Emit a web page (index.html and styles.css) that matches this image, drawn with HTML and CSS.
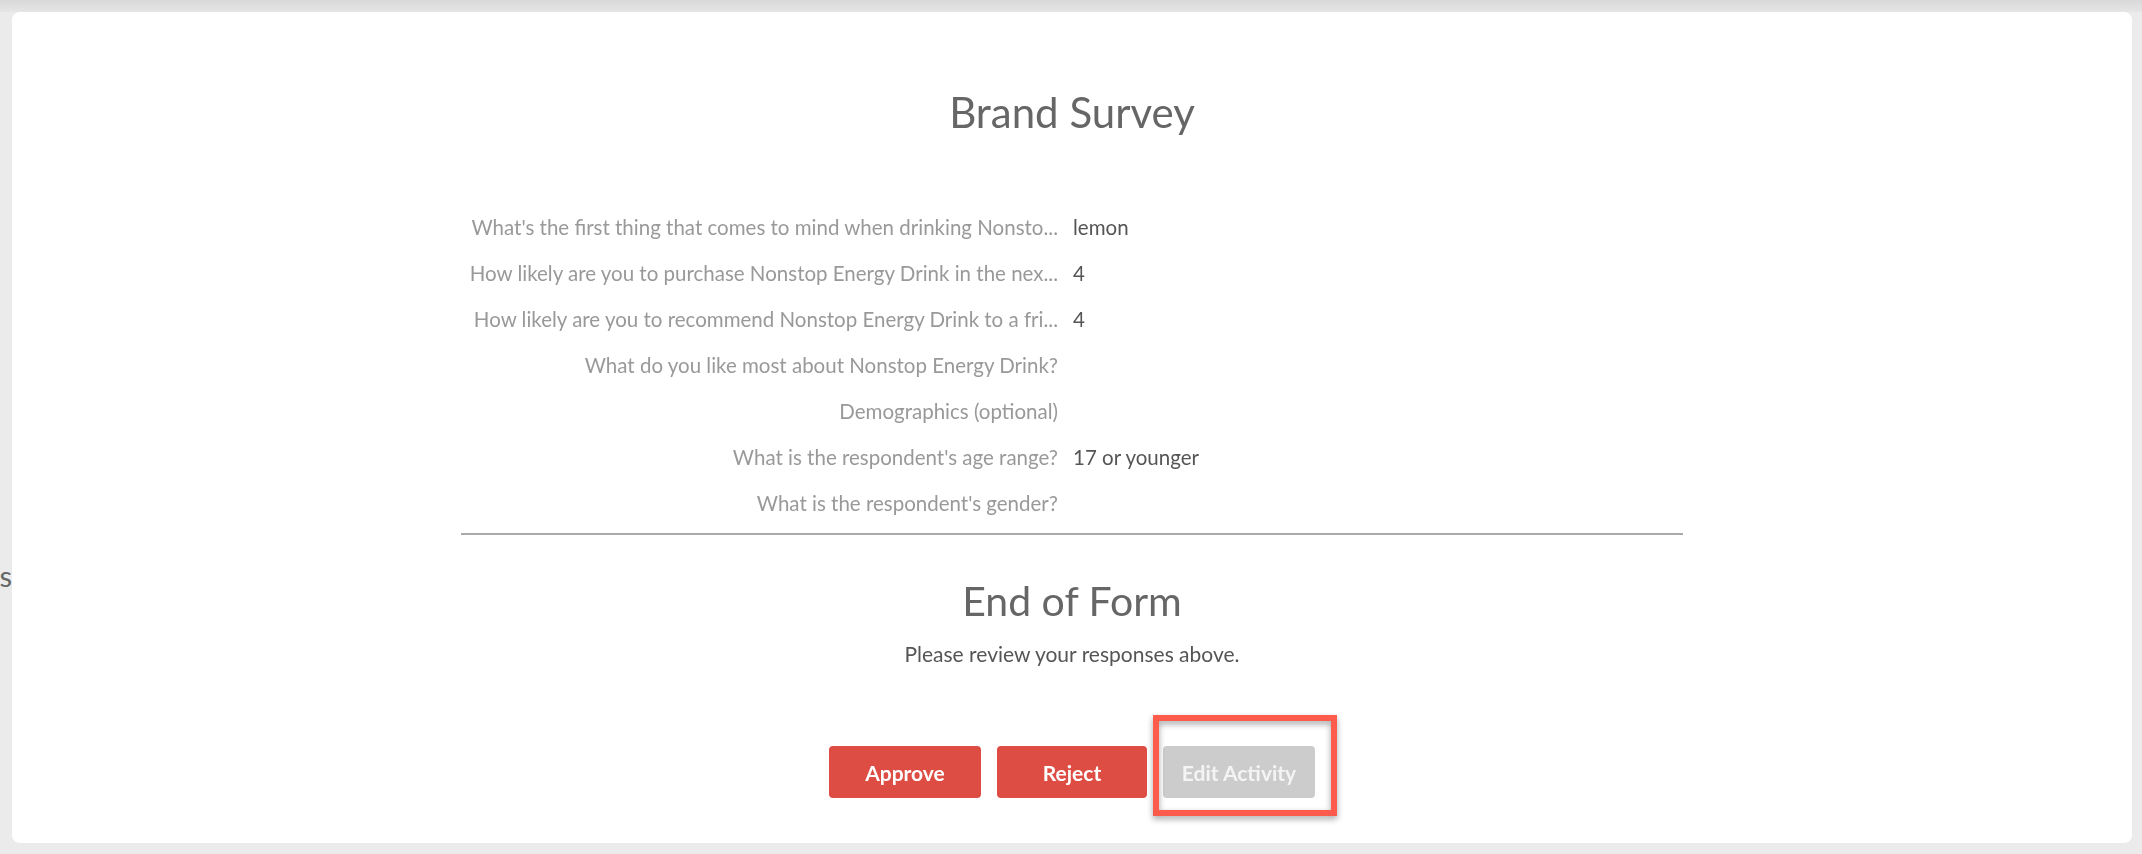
FILE: index.html
```html
<!DOCTYPE html>
<html>
  <head>
    <link rel="stylesheet" href="styles.css">
  </head>
  <body>
    <div class="page-behind">
      <nav class="side-nav">
        <span class="side-nav-item">Reports</span>
      </nav>
    </div>

    <div class="review-modal">
      <div class="form-view">
        <h1 class="form-title">Brand Survey</h1>

        <div class="form-body">
          <div class="responses">
            <div class="response-row">
              <div class="response-label">What's the first thing that comes to mind when drinking Nonsto...</div>
              <div class="response-value">lemon</div>
            </div>
            <div class="response-row">
              <div class="response-label">How likely are you to purchase Nonstop Energy Drink in the nex...</div>
              <div class="response-value">4</div>
            </div>
            <div class="response-row">
              <div class="response-label">How likely are you to recommend Nonstop Energy Drink to a fri...</div>
              <div class="response-value">4</div>
            </div>
            <div class="response-row">
              <div class="response-label">What do you like most about Nonstop Energy Drink?</div>
              <div class="response-value"></div>
            </div>
            <div class="response-row">
              <div class="response-label">Demographics (optional)</div>
              <div class="response-value"></div>
            </div>
            <div class="response-row">
              <div class="response-label">What is the respondent's age range?</div>
              <div class="response-value">17 or younger</div>
            </div>
            <div class="response-row">
              <div class="response-label">What is the respondent's gender?</div>
              <div class="response-value"></div>
            </div>
          </div>

          <hr class="form-divider" />
        </div>

        <div class="form-end">
          <h2 class="form-end-title">End of Form</h2>
          <p class="form-end-note">Please review your responses above.</p>
        </div>

        <div class="review-actions">
          <button class="action-button approve-button">Approve</button>
          <button class="action-button reject-button">Reject</button>
          <span class="highlighted">
            <button class="action-button edit-button" disabled>Edit Activity</button>
            <span class="highlight-box"></span>
          </span>
        </div>
      </div>
    </div>
  </body>
</html>
```

FILE: styles.css
```css
html,
body {
  margin: 0;
  height: 100%;
}

body {
  font-family: Lato, "Open Sans", sans-serif;
  background: linear-gradient(#d9d9d9 0, #e5e5e5 12px, #ebebeb 12px);
  color: #666;
}

/* Page underneath the modal, only its edge shows */
.page-behind {
  display: flex;
  height: 100%;
}

.side-nav {
  width: 12px;
  overflow: hidden;
  display: flex;
  align-items: flex-start;
  justify-content: flex-end;
  padding-top: 558px;
  box-sizing: border-box;
}

.side-nav-item {
  white-space: nowrap;
  font-size: 29px;
  line-height: 35px;
  color: #666;
}

.review-modal {
  position: fixed;
  top: 12px;
  left: 12px;
  right: 10px;
  bottom: 11px;
  background: #fff;
  border-radius: 8px;
  overflow: hidden;
}

.form-view {
  padding-top: 75px;
  text-align: center;
}

.form-title {
  margin: 0;
  font-size: 42px;
  line-height: 50px;
  font-weight: 400;
  color: #666;
}

.form-body {
  width: 1222px;
  margin: 67px auto 0;
}

.response-row {
  display: grid;
  grid-template-columns: 1fr 1fr;
  font-size: 20.5px;
  line-height: 46px;
}

.response-label {
  text-align: right;
  padding-right: 14px;
  color: #999;
  white-space: nowrap;
  overflow: hidden;
}

.response-value {
  text-align: left;
  padding-left: 1px;
  color: #555;
}

.form-divider {
  margin: 7px 0 0;
  border: none;
  border-top: 2px solid #aaa;
}

.form-end {
  margin-top: 41px;
}

.form-end-title {
  margin: 0;
  font-size: 41px;
  line-height: 49px;
  font-weight: 400;
  color: #666;
}

.form-end-note {
  margin: 16px 0 0;
  font-size: 21px;
  line-height: 25px;
  color: #555;
}

.review-actions {
  margin-top: 80px;
  display: flex;
  justify-content: center;
  gap: 16px;
}

.action-button {
  width: 152px;
  height: 52px;
  border: none;
  border-radius: 4px;
  font-family: Lato, "Open Sans", sans-serif;
  font-weight: 700;
  font-size: 21px;
  color: #fff;
  cursor: pointer;
}

.approve-button,
.reject-button {
  background: #de4d44;
}

.reject-button {
  width: 150px;
}

.edit-button {
  background: #cccccc;
  color: #f4f4f4;
  cursor: default;
}

/* Annotation drawn around the Edit Activity button */
.highlighted {
  position: relative;
  display: flex;
}

.highlight-box {
  position: absolute;
  top: -31px;
  left: -10px;
  right: -22px;
  bottom: -18px;
  border: 6px solid #fd5c4c;
  filter: drop-shadow(0 3px 3px rgba(0, 0, 0, 0.35));
  pointer-events: none;
}
```
